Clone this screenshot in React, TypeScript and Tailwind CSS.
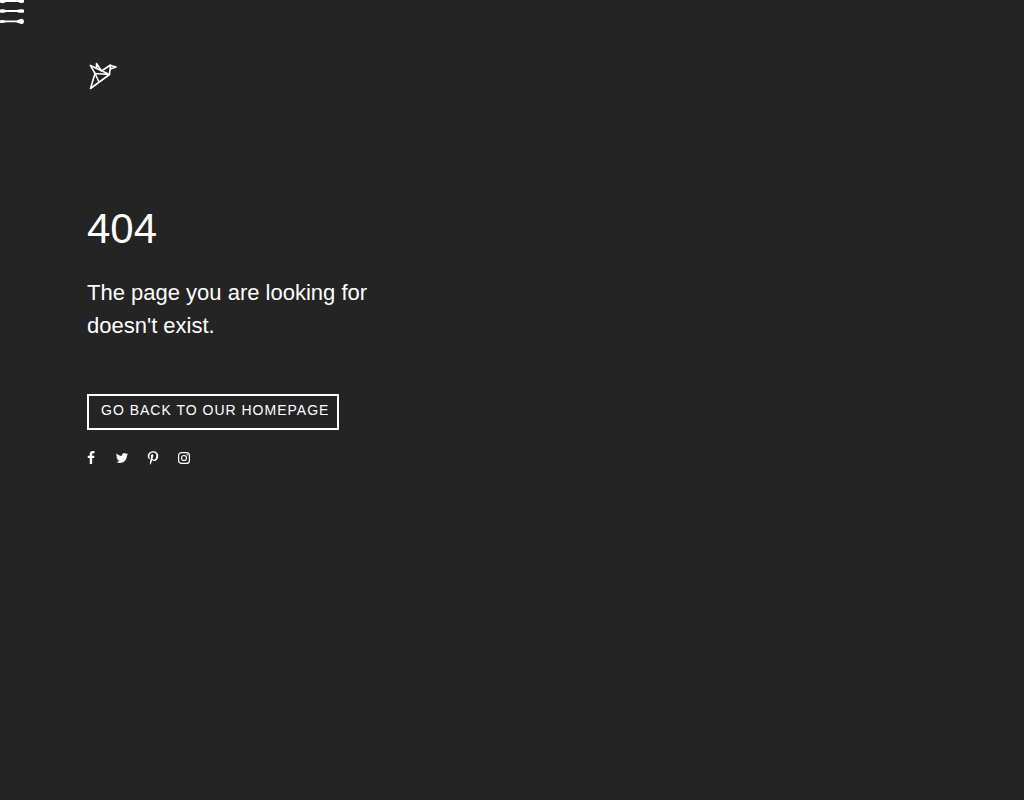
import { FaPinterestP } from "react-icons/fa";

function MenuIcon() {
  return (
    <svg width="24" height="24" viewBox="0 0 24 24" fill="#fff" aria-hidden="true">
      <path d="M0 0H24V2.6C22 3.4 20 3.2 18 2.1H6C4 3.4 2 3.4 0 2.6Z" />
      <path d="M0 9.8C2 9 4 9.200 6 10.100H17C19 9.100 21.500 8.900 24 9.700V12.400C21.500 13.200 19 12.900 17 11.900H6C4 12.800 2 13.200 0 12.400Z" />
      <path d="M0 20.400C2 19.600 4 19.800 6 20.600H16C18 20.300 19 19.200 21 18.900C22.500 18.700 24 19.600 24 21.400C24 23.300 22.500 24.200 21 23.900C19 23.600 18 22.700 16 22.300H6C4 23.200 2 23.400 0 22.700Z" />
    </svg>
  );
}

function BirdLogo() {
  return (
    <svg
      width="32"
      height="32"
      viewBox="0 0 32 32"
      fill="none"
      stroke="#fff"
      strokeWidth="1.6"
      strokeLinejoin="round"
      strokeLinecap="round"
      aria-hidden="true"
    >
      <path d="M3.500 5.500L8 13.500L3.500 28.500L22.500 14.500L23.500 5.500L29 7L23.500 9" />
      <path d="M3.500 5.500L22.500 14.500L8 13.500L12 22" />
      <path d="M9.500 8.500L9.500 3.500L14.500 11L23.500 5" />
    </svg>
  );
}

function Facebook() {
  return (
    <svg className="size-[14px] shrink-0" viewBox="0 0 1792 1792" fill="currentColor" aria-hidden="true">
      <path d="M1343 12v264h-157q-86 0-116 36t-30 108v189h293l-39 296h-254v759h-306v-759h-255v-296h255v-218q0-186 104-288.5t277-102.5q147 0 228 12z" />
    </svg>
  );
}

function Twitter() {
  return (
    <svg className="size-[14px] shrink-0" viewBox="0 0 1792 1792" fill="currentColor" aria-hidden="true">
      <path d="M1684 408q-67 98-162 167 1 14 1 42 0 130-38 259.5t-115.5 248.5-184.5 210.5-258 146-323 54.5q-271 0-496-145 35 4 78 4 225 0 401-138-105-2-188-64.5t-114-159.5q33 5 61 5 43 0 85-11-112-23-185.5-111.500t-73.500-205.500v-4q68 38 146 41-66-44-105-115t-39-154q0-88 44-163 121 149 294.500 238.500t371.500 99.500q-8-38-8-74 0-134 94.500-228.500t228.500-94.500q140 0 236 102 109-21 205-78-37 115-142 178 93-10 186-50z" />
    </svg>
  );
}

function Pinterest() {
  return <FaPinterestP className="size-[14px] shrink-0" aria-hidden="true" />;
}

function Instagram() {
  return (
    <svg className="size-[14px] shrink-0" viewBox="0 0 14 14" fill="none" stroke="currentColor" strokeWidth="1.2" aria-hidden="true">
      <rect x="1.600" y="1.600" width="10.800" height="10.800" rx="3" />
      <circle cx="7" cy="7" r="2.500" />
      <circle cx="10.200" cy="3.800" r="0.700" fill="currentColor" stroke="none" />
    </svg>
  );
}

const socials = [
  { label: "Facebook", Icon: Facebook, box: "w-2" },
  { label: "Twitter", Icon: Twitter, box: "w-[13px]" },
  { label: "Pinterest", Icon: Pinterest, box: "w-[10px]" },
  { label: "Instagram", Icon: Instagram, box: "w-3" },
];

export default function App() {
  return (
    <div className="min-h-screen bg-[#242424] font-['Liberation_Sans',Arial,sans-serif] text-white">
      <button type="button" aria-label="Open menu" className="block size-6">
        <MenuIcon />
      </button>
      <main className="px-[87px] pt-9 pb-16">
        <a href="#" aria-label="Home" className="block w-8">
          <BirdLogo />
        </a>
        <h1 className="mt-28 text-[42px] leading-[50px]">404</h1>
        <p className="mt-[22px] max-w-[300px] text-[22px] leading-[33px]">
          The page you are looking for doesn't exist.
        </p>
        <a
          href="#"
          className="mt-[52px] inline-block border-2 border-white pt-1 pr-2 pb-2 pl-3 text-sm leading-5 tracking-[1px] uppercase"
        >
          Go back to our homepage
        </a>
        <ul className="mt-5 flex items-center gap-5">
          {socials.map(({ label, Icon, box }) => (
            <li key={label}>
              <a href="#" aria-label={label} className={`flex h-4 items-center justify-center ${box}`}>
                <Icon />
              </a>
            </li>
          ))}
        </ul>
      </main>
    </div>
  );
}
